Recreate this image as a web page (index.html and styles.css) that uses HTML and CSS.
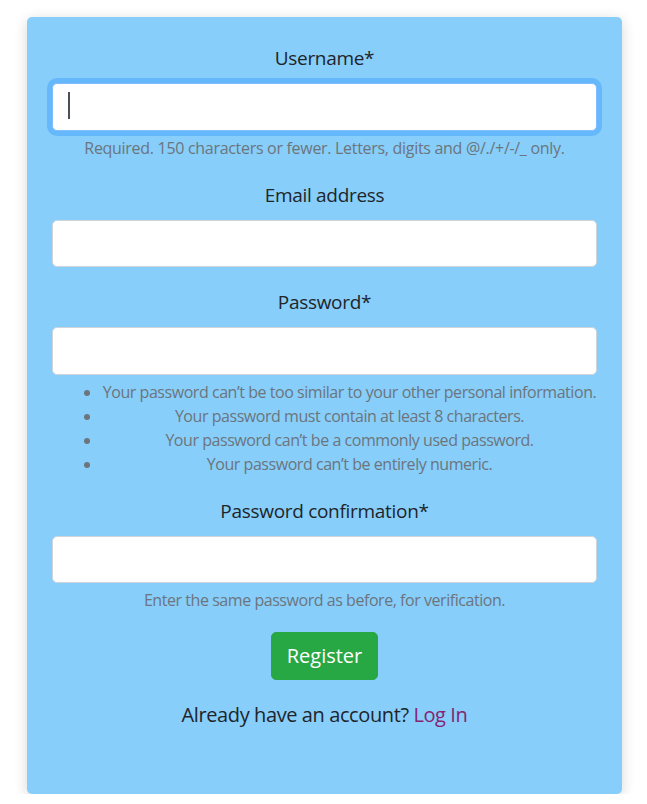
FILE: index.html
```html
<!DOCTYPE html>
<html lang="en">
<head>
<meta charset="utf-8">
<title>Register</title>
<link rel="stylesheet" href="styles.css">
</head>
<body>
<div class="card">
  <form class="form">
    <div class="form-group">
      <label class="label" for="id_username">Username*</label>
      <div class="input-wrap">
        <input class="form-control is-focused" type="text" id="id_username">
        <span class="caret"></span>
      </div>
      <small class="form-text">Required. 150 characters or fewer. Letters, digits and @/./+/-/_ only.</small>
    </div>
    <div class="form-group">
      <label class="label" for="id_email">Email address</label>
      <input class="form-control" type="email" id="id_email">
    </div>
    <div class="form-group">
      <label class="label" for="id_password1">Password*</label>
      <input class="form-control" type="password" id="id_password1">
      <small class="form-text">
        <ul class="rules">
          <li>Your password can’t be too similar to your other personal information.</li>
          <li>Your password must contain at least 8 characters.</li>
          <li>Your password can’t be a commonly used password.</li>
          <li>Your password can’t be entirely numeric.</li>
        </ul>
      </small>
    </div>
    <div class="form-group">
      <label class="label" for="id_password2">Password confirmation*</label>
      <input class="form-control" type="password" id="id_password2">
      <small class="form-text form-text-tight">Enter the same password as before, for verification.</small>
    </div>
    <button class="btn-success" type="submit">Register</button>
  </form>
  <p class="login">Already have an account? <a class="login-link" href="#">Log In</a></p>
</div>
</body>
</html>
```

FILE: styles.css
```css
html, body {
  margin: 0;
  padding: 0;
  background: #ffffff;
}

body {
  font-family: "Open Sans", "Noto Sans", sans-serif;
  font-size: 20px;
  line-height: 30px;
  letter-spacing: -0.4px;
  color: #212529;
}

.card {
  box-sizing: border-box;
  width: 595px;
  margin: 17px 0 0 27px;
  padding: 26px 25px 25px;
  background: #87cefa;
  border-radius: 5px;
  box-shadow: 0 3px 14px rgba(0, 0, 0, 0.16);
  text-align: center;
}

.form {
  display: block;
}

.form-group {
  margin-bottom: 20px;
}

.label {
  display: block;
  margin-bottom: 10px;
  font-size: 19px;
  letter-spacing: -0.3px;
}

.input-wrap {
  position: relative;
}

.form-control {
  display: block;
  box-sizing: border-box;
  width: 100%;
  height: 47.5px;
  margin: 0;
  padding: 7px 15px;
  font: inherit;
  color: #495057;
  background: #ffffff;
  border: 1px solid #ced4da;
  border-radius: 5px;
  outline: none;
}

.form-control.is-focused {
  border-color: #80bdff;
  box-shadow: 0 0 0 5px rgba(0, 123, 255, 0.25);
  caret-color: transparent;
}

.caret {
  position: absolute;
  left: 16px;
  top: 9px;
  width: 2px;
  height: 27px;
  background: #495057;
}

.form-text {
  display: block;
  margin-top: 5px;
  font-size: 16px;
  line-height: 24px;
  letter-spacing: -0.3px;
  color: #6c757d;
}

.form-text-tight {
  letter-spacing: -0.45px;
}

.rules {
  margin: 0 0 20px;
  padding-left: 50px;
  letter-spacing: -0.45px;
}

.rules li {
  text-align: center;
  white-space: nowrap;
}

.btn-success {
  display: inline-block;
  box-sizing: border-box;
  height: 48px;
  margin: 0;
  padding: 0 15px;
  font: inherit;
  color: #ffffff;
  background: #28a745;
  border: 1px solid #28a745;
  border-radius: 5px;
  vertical-align: top;
}

.login {
  margin: 20px 0 39px;
}

.login-link {
  color: #852571;
  text-decoration: none;
}
```
